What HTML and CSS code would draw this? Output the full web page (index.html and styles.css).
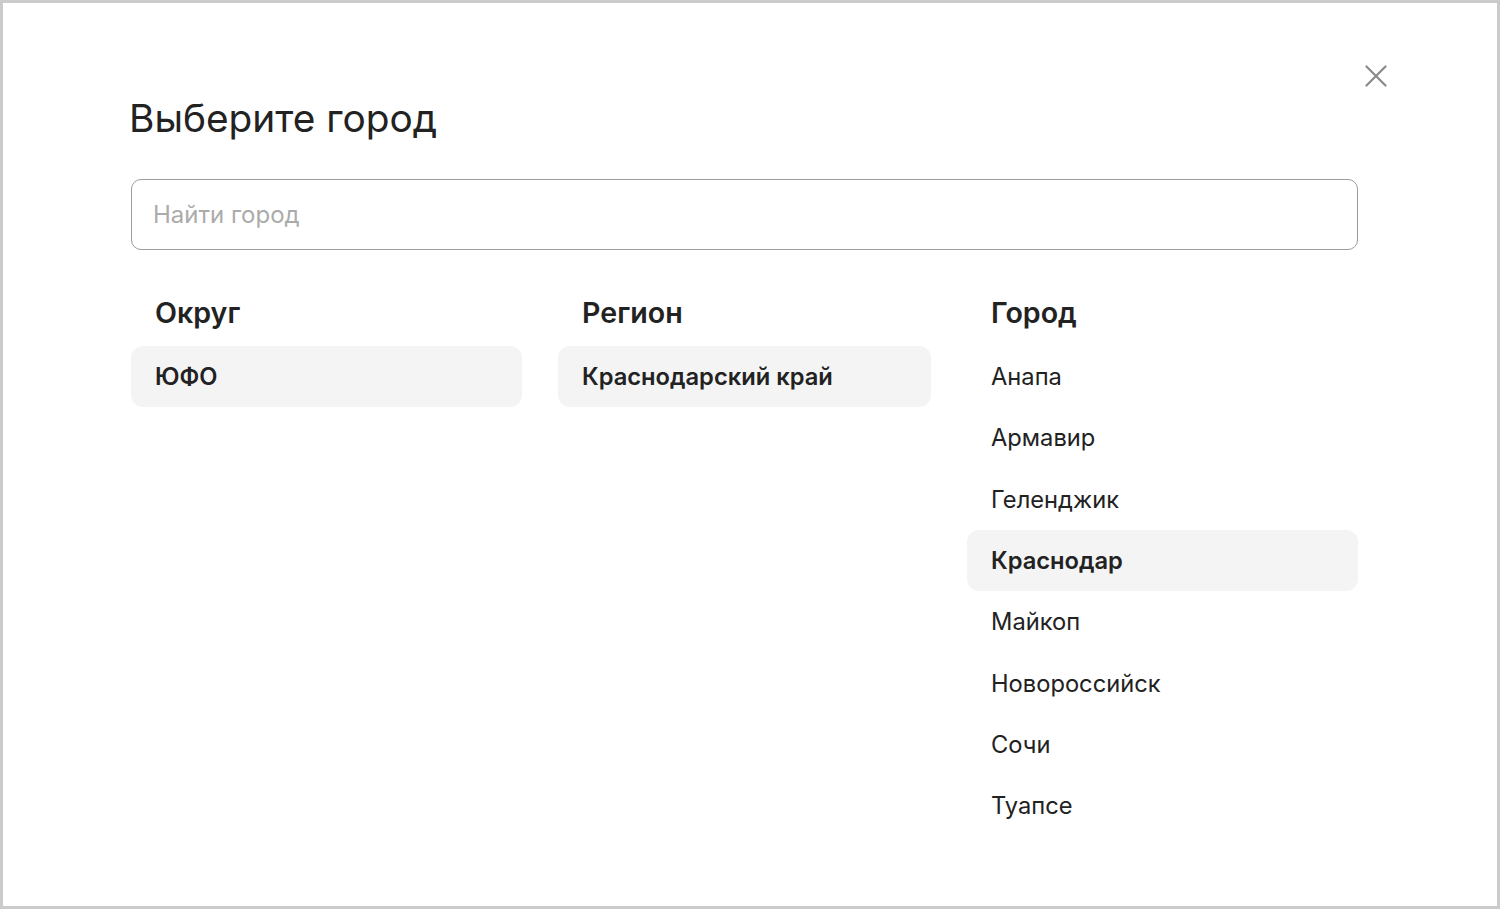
FILE: index.html
```html
<!DOCTYPE html>
<html lang="ru">
<head>
  <meta charset="UTF-8">
  <title>Выберите город</title>
  <link rel="stylesheet" href="styles.css">
</head>
<body>
  <div class="frame">
    <button class="close" aria-label="Закрыть">
      <svg width="22" height="22" viewBox="0 0 22 22">
        <path d="M1.5 1.5 L20.5 20.5 M20.5 1.5 L1.5 20.5" stroke="#8a8a8a" stroke-width="2.2" fill="none" stroke-linecap="round"/>
      </svg>
    </button>

    <h1 class="title">Выберите город</h1>

    <input class="search" type="text" placeholder="Найти город">

    <div class="columns">
      <div class="column">
        <div class="col-head">Округ</div>
        <div class="item active">ЮФО</div>
      </div>
      <div class="column">
        <div class="col-head">Регион</div>
        <div class="item active">Краснодарский край</div>
      </div>
      <div class="column">
        <div class="col-head">Город</div>
        <div class="item">Анапа</div>
        <div class="item">Армавир</div>
        <div class="item">Геленджик</div>
        <div class="item active">Краснодар</div>
        <div class="item">Майкоп</div>
        <div class="item">Новороссийск</div>
        <div class="item">Сочи</div>
        <div class="item">Туапсе</div>
      </div>
    </div>
  </div>
</body>
</html>
```

FILE: styles.css
```css
body {
  margin: 0;
  font-family: Inter, "Noto Sans", sans-serif;
  color: #222;
  background: #fff;
}
.frame {
  position: relative;
  height: 909px;
  box-sizing: border-box;
  border: 3px solid #cbcbcb;
  padding: 93px 139px 0 128px;
}
.close {
  position: absolute;
  top: 62px;
  right: 110px;
  padding: 0;
  border: none;
  background: none;
  cursor: pointer;
  line-height: 0;
}
.title {
  margin: 0 0 39px -2px;
  font-size: 38.8px;
  line-height: 44px;
  font-weight: 400;
  color: #222;
}
.search {
  display: block;
  width: 100%;
  height: 71px;
  box-sizing: border-box;
  border: 1px solid #9c9c9c;
  border-radius: 10px;
  padding: 0 21px;
  font-family: inherit;
  font-size: 24px;
  color: #222;
  outline: none;
}
.search::placeholder {
  color: #ababab;
}
.columns {
  display: grid;
  grid-template-columns: 391px 373px 391px;
  column-gap: 36px;
  margin-top: 46px;
}
.col-head {
  padding: 0 24px;
  font-size: 28.6px;
  line-height: 34px;
  font-weight: 600;
  margin-bottom: 16px;
}
.item {
  display: flex;
  align-items: center;
  height: 61.3px;
  padding: 0 24px;
  font-size: 23.7px;
  border-radius: 12px;
  cursor: pointer;
}
.item.active {
  background: #f4f4f4;
  font-weight: 600;
}
```
